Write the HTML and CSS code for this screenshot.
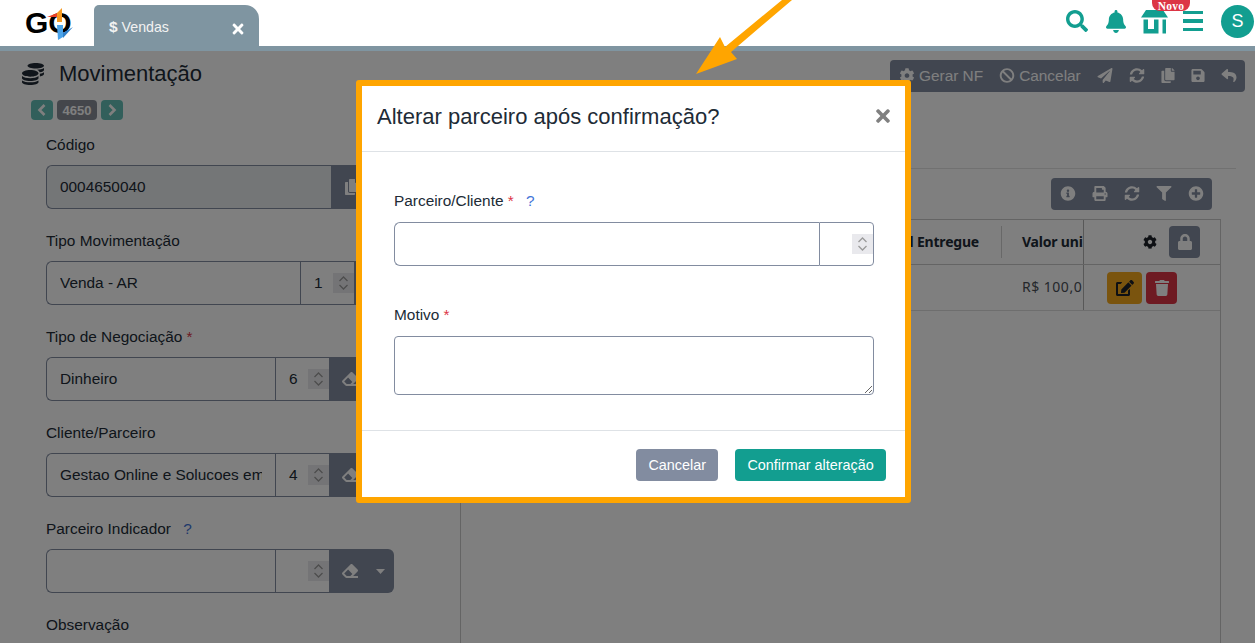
FILE: index.html
```html
<!DOCTYPE html>
<html>
<head>
  <meta name="viewport" content="width=device-width, initial-scale=1">
  <title>Movimentação</title>
  <link rel="stylesheet" href="styles.css">
</head>
<body>
  <svg class="defs" aria-hidden="true">
    <symbol id="i-search" viewBox="0 0 512 512"><path d="M505 442.7L405.3 343c-4.5-4.5-10.6-7-17-7H372c27.6-35.3 44-79.7 44-128C416 93.1 322.9 0 208 0S0 93.1 0 208s93.1 208 208 208c48.3 0 92.7-16.4 128-44v16.3c0 6.4 2.5 12.5 7 17l99.7 99.7c9.4 9.4 24.6 9.4 33.9 0l28.3-28.3c9.4-9.4 9.4-24.6.1-34zM208 336c-70.7 0-128-57.2-128-128 0-70.7 57.2-128 128-128 70.7 0 128 57.2 128 128 0 70.7-57.2 128-128 128z"/></symbol>
    <symbol id="i-bell" viewBox="0 0 448 512"><path d="M224 512c35.32 0 63.97-28.65 63.97-64H160.03c0 35.35 28.65 64 63.97 64zm215.39-149.71c-19.32-20.76-55.47-51.99-55.47-154.29 0-77.7-54.48-139.9-127.94-155.16V32c0-17.67-14.32-32-31.98-32s-31.98 14.33-31.98 32v20.84C118.56 68.1 64.08 130.3 64.08 208c0 102.3-36.15 133.53-55.47 154.29-6 6.45-8.66 14.16-8.61 21.71.11 16.4 12.98 32 32.1 32h383.8c19.12 0 32-15.6 32.1-32 .05-7.55-2.61-15.27-8.61-21.71z"/></symbol>
    <symbol id="i-store" viewBox="0 0 27 24"><path d="M5 0h17l5 7.500h-27zM2.500 9.500h4.500v9.500h6v-9.500h4.500v14h-15zM21.500 9.500h3.500v14h-3.500z"/></symbol>
    <symbol id="i-times" viewBox="0 0 352 512"><path d="M242.72 256l100.07-100.07c12.28-12.28 12.28-32.19 0-44.48l-22.24-22.24c-12.28-12.28-32.19-12.28-44.48 0L176 189.28 75.93 89.21c-12.28-12.28-32.19-12.28-44.48 0L9.21 111.45c-12.28 12.28-12.28 32.19 0 44.48L109.28 256 9.21 356.07c-12.28 12.28-12.28 32.19 0 44.48l22.24 22.24c12.28 12.28 32.2 12.28 44.48 0L176 322.72l100.07 100.07c12.28 12.28 32.2 12.28 44.48 0l22.24-22.24c12.28-12.28 12.28-32.19 0-44.48L242.72 256z"/></symbol>
    <symbol id="i-cog" viewBox="0 0 512 512"><path d="M487.4 315.7l-42.6-24.6c4.3-23.2 4.3-47 0-70.2l42.6-24.6c4.9-2.8 7.1-8.6 5.5-14-11.1-35.6-30-67.8-54.7-94.6-3.8-4.1-10-5.1-14.8-2.3L380.8 110c-17.9-15.4-38.5-27.3-60.8-35.1V25.8c0-5.6-3.9-10.5-9.4-11.7-36.7-8.2-74.3-7.8-109.2 0-5.500 1.200-9.400 6.100-9.400 11.700V75c-22.200 7.900-42.800 19.800-60.800 35.100L88.700 85.500c-4.900-2.800-11-1.900-14.800 2.300-24.700 26.700-43.600 58.900-54.700 94.600-1.700 5.400.6 11.200 5.500 14L67.300 221c-4.300 23.200-4.300 47 0 70.200l-42.600 24.600c-4.900 2.800-7.100 8.600-5.500 14 11.100 35.600 30 67.800 54.700 94.600 3.800 4.100 10 5.100 14.800 2.300l42.600-24.600c17.900 15.400 38.500 27.300 60.800 35.100v49.200c0 5.600 3.900 10.500 9.400 11.700 36.700 8.200 74.300 7.800 109.200 0 5.500-1.200 9.400-6.100 9.400-11.700v-49.200c22.200-7.900 42.800-19.800 60.800-35.100l42.600 24.600c4.900 2.800 11 1.900 14.800-2.300 24.700-26.700 43.600-58.900 54.700-94.600 1.500-5.500-.7-11.300-5.600-14.100zM256 336c-44.100 0-80-35.900-80-80s35.900-80 80-80 80 35.900 80 80-35.900 80-80 80z"/></symbol>
    <symbol id="i-ban" viewBox="0 0 512 512"><path d="M256 8C119.034 8 8 119.033 8 256s111.034 248 248 248 248-111.034 248-248S392.967 8 256 8zm130.108 117.892c65.448 65.448 70 165.481 20.677 235.637L150.470 105.216c70.204-49.356 170.226-44.735 235.638 20.676zM125.892 386.108c-65.448-65.448-70-165.481-20.677-235.637L361.530 406.784c-70.203 49.356-170.226 44.736-235.638-20.676z"/></symbol>
    <symbol id="i-plane" viewBox="0 0 512 512"><path d="M476 3.200L12.500 270.600c-18.100 10.400-15.800 35.600 2.200 43.200L121 358.400l287.300-253.200c5.500-4.900 13.300 2.600 8.600 8.300L176 407v80.500c0 23.600 28.500 32.900 42.500 15.800L282 426l124.600 52.200c14.200 6 30.400-2.900 33-18.200l72-432C515 7.800 493.300-6.800 476 3.200z"/></symbol>
    <symbol id="i-sync" viewBox="0 0 512 512"><path d="M370.720 133.280C339.458 104.008 298.888 87.962 255.848 88c-77.458.068-144.328 53.178-162.791 126.850-1.344 5.363-6.122 9.150-11.651 9.150H24.103c-7.498 0-13.194-6.807-11.807-14.176C33.933 94.924 134.813 8 256 8c66.448 0 126.791 26.136 171.315 68.685L463.030 40.970C478.149 25.851 504 36.559 504 57.941V192c0 13.255-10.745 24-24 24H345.941c-21.382 0-32.090-25.851-16.971-40.971l41.750-41.749zM32 296h134.059c21.382 0 32.090 25.851 16.971 40.971l-41.750 41.750c31.262 29.273 71.835 45.319 114.876 45.280 77.418-.07 144.315-53.144 162.787-126.849 1.344-5.363 6.122-9.150 11.651-9.150h57.304c7.498 0 13.194 6.807 11.807 14.176C478.067 417.076 377.187 504 256 504c-66.448 0-126.791-26.136-171.315-68.685L48.970 471.030C33.851 486.149 8 475.441 8 454.059V320c0-13.255 10.745-24 24-24z"/></symbol>
    <symbol id="i-copy" viewBox="0 0 448 512"><path d="M320 448v40c0 13.255-10.745 24-24 24H24c-13.255 0-24-10.745-24-24V120c0-13.255 10.745-24 24-24h72v296c0 30.879 25.121 56 56 56h168zm0-344V0H152c-13.255 0-24 10.745-24 24v368c0 13.255 10.745 24 24 24h272c13.255 0 24-10.745 24-24V128H344c-13.200 0-24-10.800-24-24zm120.971-31.029L375.029 7.029A24 24 0 0 0 358.059 0H352v96h96v-6.059a24 24 0 0 0-7.029-16.970z"/></symbol>
    <symbol id="i-save" viewBox="0 0 448 512"><path d="M433.941 129.941l-83.882-83.882A48 48 0 0 0 316.118 32H48C21.490 32 0 53.490 0 80v352c0 26.510 21.490 48 48 48h352c26.510 0 48-21.490 48-48V163.882a48 48 0 0 0-14.059-33.941zM224 416c-35.346 0-64-28.654-64-64 0-35.346 28.654-64 64-64s64 28.654 64 64c0 35.346-28.654 64-64 64zm96-304.520V212c0 6.627-5.373 12-12 12H76c-6.627 0-12-5.373-12-12V108c0-6.627 5.373-12 12-12h228.520c3.183 0 6.235 1.264 8.485 3.515l3.480 3.480A11.996 11.996 0 0 1 320 111.480z"/></symbol>
    <symbol id="i-reply" viewBox="0 0 512 512"><path d="M8.309 189.836L184.313 37.851C199.719 24.546 224 35.347 224 56.015v80.053c160.629 1.839 288 34.032 288 186.258 0 61.441-39.581 122.309-83.333 154.132-13.653 9.931-33.111-2.533-28.077-18.631 45.344-145.012-21.507-183.510-176.590-185.742V360c0 20.700-24.300 31.453-39.687 18.164l-176.004-152c-11.071-9.562-11.086-26.753 0-36.328z"/></symbol>
    <symbol id="i-info" viewBox="0 0 512 512"><path d="M256 8C119.043 8 8 119.083 8 256c0 136.997 111.043 248 248 248s248-111.003 248-248C504 119.083 392.957 8 256 8zm0 110c23.196 0 42 18.804 42 42s-18.804 42-42 42-42-18.804-42-42 18.804-42 42-42zm56 254c0 6.627-5.373 12-12 12h-88c-6.627 0-12-5.373-12-12v-24c0-6.627 5.373-12 12-12h12v-64h-12c-6.627 0-12-5.373-12-12v-24c0-6.627 5.373-12 12-12h64c6.627 0 12 5.373 12 12v100h12c6.627 0 12 5.373 12 12v24z"/></symbol>
    <symbol id="i-print" viewBox="0 0 512 512"><path d="M448 192V77.250c0-8.490-3.370-16.620-9.370-22.630L393.370 9.370c-6-6-14.140-9.370-22.630-9.370H96C78.330 0 64 14.330 64 32v160c-35.350 0-64 28.650-64 64v112c0 8.840 7.160 16 16 16h48v96c0 17.670 14.330 32 32 32h320c17.670 0 32-14.330 32-32v-96h48c8.840 0 16-7.160 16-16V256c0-35.350-28.650-64-64-64zm-64 256H128v-96h256v96zm0-224H128V64h192v48c0 8.840 7.160 16 16 16h48v96zm48 72c-13.250 0-24-10.750-24-24 0-13.260 10.750-24 24-24s24 10.740 24 24c0 13.250-10.750 24-24 24z"/></symbol>
    <symbol id="i-filter" viewBox="0 0 512 512"><path d="M487.976 0H24.028C2.710 0-8.047 25.866 7.058 40.971L192 225.941V432c0 7.831 3.821 15.170 10.237 19.662l80 55.980C298.020 518.690 320 507.493 320 487.980V225.941l184.947-184.970C520.021 25.896 509.338 0 487.976 0z"/></symbol>
    <symbol id="i-plus" viewBox="0 0 512 512"><path d="M256 8C119 8 8 119 8 256s111 248 248 248 248-111 248-248S393 8 256 8zm144 276c0 6.600-5.400 12-12 12h-92v92c0 6.600-5.400 12-12 12h-56c-6.600 0-12-5.400-12-12v-92h-92c-6.600 0-12-5.400-12-12v-56c0-6.600 5.400-12 12-12h92v-92c0-6.600 5.400-12 12-12h56c6.600 0 12 5.400 12 12v92h92c6.600 0 12 5.400 12 12v56z"/></symbol>
    <symbol id="i-lock" viewBox="0 0 448 512"><path d="M400 224h-24v-72C376 68.200 307.800 0 224 0S72 68.200 72 152v72H48c-26.500 0-48 21.500-48 48v192c0 26.500 21.500 48 48 48h352c26.500 0 48-21.500 48-48V272c0-26.500-21.500-48-48-48zm-104 0H152v-72c0-39.700 32.300-72 72-72s72 32.300 72 72v72z"/></symbol>
    <symbol id="i-trash" viewBox="0 0 448 512"><path d="M432 32H312l-9.400-18.700A24 24 0 0 0 281.100 0H166.800a23.720 23.720 0 0 0-21.400 13.300L136 32H16A16 16 0 0 0 0 48v32a16 16 0 0 0 16 16h416a16 16 0 0 0 16-16V48a16 16 0 0 0-16-16zM53.200 467a48 48 0 0 0 47.900 45h245.800a48 48 0 0 0 47.900-45L416 128H32z"/></symbol>
    <symbol id="i-edit" viewBox="0 0 576 512"><path d="M402.600 83.200l90.200 90.200c3.800 3.800 3.800 10 0 13.800L274.400 405.600l-92.800 10.300c-12.400 1.400-22.900-9.100-21.500-21.500l10.300-92.800L388.800 83.200c3.800-3.800 10-3.800 13.800 0zm162-22.900l-48.800-48.800c-15.200-15.200-39.900-15.200-55.200 0l-35.400 35.400c-3.800 3.800-3.800 10 0 13.800l90.200 90.200c3.800 3.800 10 3.800 13.800 0l35.400-35.400c15.200-15.300 15.200-40 0-55.200zM384 346.200V448H64V128h73.900c3.200 0 6.200-1.300 8.500-3.500l40-40c7.600-7.600 2.200-20.500-8.500-20.500H48C21.500 64 0 85.500 0 112v352c0 26.500 21.500 48 48 48h352c26.500 0 48-21.500 48-48V306.200c0-10.700-12.900-16-20.500-8.500l-40 40c-2.200 2.300-3.500 5.300-3.500 8.500z"/></symbol>
    <symbol id="i-eraser" viewBox="0 0 512 512"><path d="M497.941 273.941c18.745-18.745 18.745-49.137 0-67.882l-160-160c-18.745-18.745-49.136-18.746-67.883 0l-256 256c-18.745 18.745-18.745 49.137 0 67.882l96 96A48.004 48.004 0 0 0 144 480h356c6.627 0 12-5.373 12-12v-40c0-6.627-5.373-12-12-12H355.883l142.058-142.059zm-302.627-62.627l137.373 137.373L265.373 416H150.628l-80-80 124.686-124.686z"/></symbol>
    <symbol id="i-coins" viewBox="0 0 512 512"><path d="M0 405.300V448c0 35.300 86 64 192 64s192-28.700 192-64v-42.700C342.700 434.400 267.200 448 192 448S41.300 434.400 0 405.300zM320 128c106 0 192-28.700 192-64S426 0 320 0 128 28.700 128 64s86 64 192 64zM0 300.400V352c0 35.300 86 64 192 64s192-28.700 192-64v-51.600c-41.300 34-116.900 51.600-192 51.600S41.300 334.400 0 300.400zm416 11c57.300-11.100 96-31.700 96-55.400v-42.700c-23.200 16.400-57.300 27.600-96 34.500v63.600zM192 160C86 160 0 195.800 0 240s86 80 192 80 192-35.800 192-80-86-80-192-80zm219.300 56.300c60-10.800 100.700-32 100.700-56.300v-42.700c-35.500 25.100-96.500 38.600-160.700 41.800 29.500 14.300 51.200 33.500 60 57.200z"/></symbol>
    <symbol id="i-left" viewBox="0 0 22 20"><path d="M13.500 5L8.500 10l5 5" fill="none" stroke="currentColor" stroke-width="2.600"/></symbol>
    <symbol id="i-right" viewBox="0 0 22 20"><path d="M8.500 5l5 5-5 5" fill="none" stroke="currentColor" stroke-width="2.600"/></symbol>
    <symbol id="i-spin" viewBox="0 0 21 20"><path d="M6.500 8l4-4 4 4M6.500 12l4 4 4-4" fill="none" stroke="#9a9a9a" stroke-width="1.300"/></symbol>
    <symbol id="i-caret" viewBox="0 0 9 5"><path d="M0 0h9L4.500 5z"/></symbol>
  </svg>

  <div class="app">
    <header class="topbar">
      <div class="logo">
        <span class="logo-text">GO</span>
        <svg class="logo-mark" viewBox="0 0 50 32" aria-hidden="true">
          <path d="M22 9l13-5v5z" fill="#e8412a"/>
          <path d="M32 14V5l5-5v14z" fill="#f59a23"/>
          <path d="M32 17h6v12l-5 3z" fill="#4aa3ea"/>
          <path d="M38 25l10-6-10 11z" fill="#2f7fc9"/>
        </svg>
      </div>
      <div class="tab">
        <span class="tab-title"><b>$</b> Vendas</span>
        <svg class="tab-close"><use href="#i-times"/></svg>
      </div>
      <nav class="top-icons">
        <svg class="top-search"><use href="#i-search"/></svg>
        <svg class="top-bell"><use href="#i-bell"/></svg>
        <div class="store">
          <svg class="top-store"><use href="#i-store"/></svg>
          <span class="badge">Novo</span>
        </div>
        <div class="bars"><i></i><i></i><i></i></div>
        <div class="avatar">S</div>
      </nav>
    </header>
    <div class="topline"></div>

    <main class="page">
      <section class="left">
        <h1 class="title"><svg class="title-icon"><use href="#i-coins"/></svg>Movimentação</h1>
        <div class="pager">
          <span class="pill pill-teal"><svg><use href="#i-left"/></svg></span>
          <span class="pill pill-num">4650</span>
          <span class="pill pill-teal"><svg><use href="#i-right"/></svg></span>
        </div>

        <div class="field">
          <label>Código</label>
          <div class="group">
            <input class="ctl ctl-off" value="0004650040" readonly>
            <span class="dark dark-copy"><svg><use href="#i-copy"/></svg></span>
          </div>
        </div>
        <div class="field">
          <label>Tipo Movimentação</label>
          <div class="group">
            <input class="ctl" value="Venda - AR" readonly>
            <span class="num">1<svg class="spin"><use href="#i-spin"/></svg></span>
            <span class="dark dark-short"></span>
          </div>
        </div>
        <div class="field">
          <label>Tipo de Negociação <em>*</em></label>
          <div class="group">
            <input class="ctl" value="Dinheiro" readonly>
            <span class="num">6<svg class="spin"><use href="#i-spin"/></svg></span>
            <span class="dark"><svg><use href="#i-eraser"/></svg><svg class="caret"><use href="#i-caret"/></svg></span>
          </div>
        </div>
        <div class="field">
          <label>Cliente/Parceiro</label>
          <div class="group">
            <input class="ctl" value="Gestao Online e Solucoes em Tecnologia" readonly>
            <span class="num">4<svg class="spin"><use href="#i-spin"/></svg></span>
            <span class="dark"><svg><use href="#i-eraser"/></svg><svg class="caret"><use href="#i-caret"/></svg></span>
          </div>
        </div>
        <div class="field">
          <label>Parceiro Indicador <a class="hint">?</a></label>
          <div class="group">
            <input class="ctl" readonly>
            <span class="num"><svg class="spin"><use href="#i-spin"/></svg></span>
            <span class="dark"><svg><use href="#i-eraser"/></svg><svg class="caret"><use href="#i-caret"/></svg></span>
          </div>
        </div>
        <div class="field">
          <label>Observação</label>
        </div>
      </section>

      <section class="right">
        <div class="toolbar toolbar-main">
          <svg><use href="#i-cog"/></svg><span class="tool-text">Gerar NF</span>
          <svg><use href="#i-ban"/></svg><span class="tool-text">Cancelar</span>
          <svg><use href="#i-plane"/></svg>
          <svg><use href="#i-sync"/></svg>
          <svg class="tool-narrow"><use href="#i-copy"/></svg>
          <svg class="tool-narrow"><use href="#i-save"/></svg>
          <svg><use href="#i-reply"/></svg>
        </div>
        <hr class="rule">
        <div class="toolbar toolbar-table">
          <svg><use href="#i-info"/></svg>
          <svg><use href="#i-print"/></svg>
          <svg><use href="#i-sync"/></svg>
          <svg><use href="#i-filter"/></svg>
          <svg><use href="#i-plus"/></svg>
        </div>
        <div class="table">
          <div class="row row-head">
            <div class="col-qty">Total Entregue</div>
            <div class="col-val">Valor uni</div>
            <div class="col-act">
              <svg class="gear"><use href="#i-cog"/></svg>
              <span class="lock"><svg><use href="#i-lock"/></svg></span>
            </div>
          </div>
          <div class="row row-body">
            <div class="col-qty"></div>
            <div class="col-val">R$ 100,0</div>
            <div class="col-act col-act-body">
              <span class="act act-edit"><svg><use href="#i-edit"/></svg></span>
              <span class="act act-del"><svg><use href="#i-trash"/></svg></span>
            </div>
          </div>
        </div>
      </section>

      <div class="backdrop">
        <div class="modal">
          <div class="modal-head">
            <h2>Alterar parceiro após confirmação?</h2>
            <svg class="modal-close"><use href="#i-times"/></svg>
          </div>
          <div class="modal-body">
            <label>Parceiro/Cliente <em>*</em> <a class="hint">?</a></label>
            <div class="group group-modal">
              <input class="ctl">
              <span class="num"><svg class="spin"><use href="#i-spin"/></svg></span>
            </div>
            <label>Motivo <em>*</em></label>
            <textarea class="memo"></textarea>
          </div>
          <div class="modal-foot">
            <button class="btn btn-gray">Cancelar</button>
            <button class="btn btn-teal">Confirmar alteração</button>
          </div>
        </div>
      </div>
    </main>

    <svg class="arrow" viewBox="0 0 1255 100" aria-hidden="true">
      <path d="M782 0h10l-61 52 6 7-41 15 24-37 5 10z"/>
    </svg>
  </div>
</body>
</html>
```

FILE: styles.css
```css
* {
  box-sizing: border-box;
}
html, body {
  margin: 0;
  height: 100%;
  overflow: hidden;
}
body {
  font-family: "Liberation Sans", Arial, sans-serif;
  font-size: 15.4px;
  color: #212b36;
  background: #fff;
}
.defs {
  display: none;
}
.app {
  position: relative;
  height: 643px;
  overflow: hidden;
}

/* top bar */
.topbar {
  display: flex;
  height: 46px;
  padding-left: 25px;
}
.logo {
  position: relative;
  width: 69px;
  padding-top: 6px;
}
.logo-text {
  font-size: 30px;
  font-weight: bold;
  line-height: 34px;
  color: #000;
}
.logo-mark {
  position: absolute;
  left: 0;
  top: 8px;
  width: 50px;
  height: 32px;
}
.tab {
  display: flex;
  align-items: center;
  justify-content: space-between;
  width: 165px;
  height: 41px;
  margin-top: 5px;
  padding: 3px 15px 0 15px;
  background: #7f95a1;
  color: #f2f2f2;
  border-radius: 5px 14px 0 0;
  font-size: 14.2px;
}
.tab-title b {
  font-size: 15.5px;
}
.tab-close {
  width: 12px;
  height: 16px;
  margin-top: 4px;
  fill: #fff;
}
.top-icons {
  display: flex;
  align-items: center;
  gap: 15px;
  margin-left: auto;
  padding: 0 1px 4px 0;
  fill: #129e90;
}
.top-search {
  width: 22px;
  height: 22px;
  margin-right: 3px;
}
.top-bell {
  width: 20px;
  height: 23px;
}
.store {
  position: relative;
  width: 27px;
  height: 24px;
  margin-top: 1px;
}
.top-store {
  display: block;
  width: 27px;
  height: 24px;
}
.badge {
  position: absolute;
  left: 11px;
  top: -14px;
  display: flex;
  align-items: flex-end;
  justify-content: center;
  width: 38px;
  height: 15px;
  padding-top: 1px;
  background: #dc3545;
  color: #fff;
  border-radius: 0 0 8px 8px;
  font-family: "Liberation Serif", serif;
  font-size: 11.5px;
  font-weight: bold;
  line-height: 9px;
  letter-spacing: .2px;
  overflow: hidden;
}
.bars {
  display: flex;
  flex-direction: column;
  gap: 5px;
  width: 20px;
  margin-right: 3px;
}
.bars i {
  height: 3.500px;
  background: #129e90;
}
.avatar {
  width: 33px;
  height: 33px;
  border-radius: 50%;
  background: #129e90;
  color: #fff;
  text-align: center;
  font-size: 18px;
  line-height: 33px;
}
.topline {
  height: 5px;
  background: #7f95a1;
}

/* page under the dialog */
.page {
  position: relative;
  display: flex;
  height: 592px;
  overflow: hidden;
}
.left {
  width: 460px;
  flex: none;
  padding: 9px 0 0 46px;
}
.title {
  display: flex;
  align-items: center;
  gap: 15px;
  height: 28px;
  margin: 0 0 12px -24px;
  font-size: 22px;
  font-weight: normal;
}
.title-icon {
  width: 22px;
  height: 22px;
  fill: #212b36;
}
.pager {
  display: flex;
  gap: 4px;
  margin: 0 0 14px -15px;
}
.pill {
  display: flex;
  align-items: center;
  justify-content: center;
  height: 20px;
  border-radius: 4px;
  color: #fff;
  opacity: .65;
}
.pill svg {
  width: 22px;
  height: 20px;
}
.pill-teal {
  width: 22px;
  background: #129e90;
}
.pill-num {
  width: 40px;
  background: #4a4f60;
  font-size: 13px;
  font-weight: bold;
}
.field {
  height: 96px;
}
label {
  display: block;
  height: 21px;
  margin-bottom: 10px;
  font-size: 15.4px;
  line-height: 21px;
}
label em {
  font-style: normal;
  color: #dc3545;
}
.hint {
  margin-left: 8px;
  color: #3f73d8;
}
.group {
  display: flex;
  width: 348px;
  height: 44px;
}
.ctl {
  flex: 1;
  min-width: 0;
  padding: 0 13px;
  border: 1px solid #828ca0;
  border-right: 0;
  border-radius: 6px 0 0 6px;
  background: #fff;
  color: #212b36;
  font: 15.4px "Liberation Sans", Arial, sans-serif;
  outline: none;
}
.ctl-off {
  background: #e9ecef;
}
.num {
  display: flex;
  align-items: center;
  justify-content: space-between;
  flex: none;
  width: 54px;
  padding: 0 0 1px 13px;
  border: 1px solid #828ca0;
  border-right: 0;
  font-size: 15.4px;
}
.spin {
  width: 21px;
  height: 20px;
  margin: 1px 0 0 auto;
  background: #e9e9ed;
}
.dark {
  display: flex;
  align-items: center;
  flex: none;
  width: 65px;
  padding-left: 13px;
  background: #828ca0;
  border-radius: 0 6px 6px 0;
  fill: #fff;
}
.dark svg {
  width: 16px;
  height: 16px;
}
.dark .caret {
  width: 9px;
  height: 5px;
  margin-left: 18px;
}
.dark-copy {
  width: 63px;
}
.dark-short {
  width: 40px;
}

/* right side */
.right {
  flex: 1;
  min-width: 0;
  padding-top: 9px;
}
.toolbar {
  display: flex;
  align-items: center;
  gap: 16px;
  height: 32px;
  margin-left: auto;
  padding-bottom: 1px;
  background: #828ca0;
  border-radius: 4px;
  color: #fff;
  fill: #fff;
}
.toolbar svg {
  width: 16px;
  height: 15px;
  flex: none;
}
.toolbar .tool-narrow {
  width: 14px;
}
.tool-text {
  margin-left: -12px;
}
.toolbar-main {
  width: 355px;
  margin-right: 10px;
  padding-left: 9px;
}
.toolbar-table {
  width: 161px;
  margin-right: 43px;
  padding-left: 9px;
}
.rule {
  height: 1px;
  margin: 76px 19px 9px 0;
  border: 0;
  background: #e3e3e3;
}
.table {
  height: 500px;
  margin: 9px 34px 0 0;
  border: 1px solid #c8c8c8;
  font-family: "Noto Sans", sans-serif;
  font-size: 14px;
}
.row {
  display: flex;
  border-bottom: 1px solid #dcdcdc;
}
.row-head {
  height: 45px;
  font-weight: bold;
  color: #212b36;
  letter-spacing: -.2px;
  border-bottom-color: #c8c8c8;
}
.row-body {
  height: 46px;
  color: #4a4f57;
}
.row-body .col-val {
  letter-spacing: .5px;
}
.col-qty {
  width: 541px;
  flex: none;
  padding-right: 22px;
  text-align: right;
  line-height: 44px;
  white-space: nowrap;
}
.row-head .col-qty {
  height: 32px;
  margin-top: 6px;
  line-height: 32px;
  border-right: 1px solid #d0d0d0;
}
.col-val {
  width: 82px;
  flex: none;
  padding-left: 20px;
  line-height: 44px;
  white-space: nowrap;
  overflow: hidden;
  border-right: 1px solid #b0b0b0;
}
.col-act {
  display: flex;
  align-items: center;
  flex: 1;
  padding-left: 59px;
}
.gear {
  width: 14px;
  height: 14px;
  fill: #1c2128;
}
.lock {
  display: flex;
  align-items: center;
  justify-content: center;
  width: 31px;
  height: 32px;
  margin-left: 12px;
  background: #828ca0;
  border-radius: 4px;
}
.lock svg {
  width: 14px;
  height: 16px;
  fill: #fff;
}
.col-act-body {
  gap: 4px;
  padding-left: 23px;
}
.act {
  display: flex;
  align-items: center;
  justify-content: center;
  height: 32px;
  border-radius: 4px;
}
.act-edit {
  width: 35px;
  background: #f5a81c;
  fill: #1c2128;
}
.act-edit svg {
  width: 18px;
  height: 16px;
}
.act-del {
  width: 31px;
  background: #dc3545;
  fill: #fff;
}
.act-del svg {
  width: 14px;
  height: 16px;
}

/* dialog */
.backdrop {
  position: absolute;
  left: 0;
  top: 0;
  right: 0;
  bottom: 0;
  background: rgba(0, 0, 0, .5);
}
.modal {
  position: absolute;
  left: 356px;
  top: 29px;
  width: 555px;
  height: 423px;
  border: 6.500px solid #ffa500;
  border-radius: 3px;
  background: #fff;
}
.modal-head {
  display: flex;
  align-items: center;
  justify-content: space-between;
  height: 66px;
  padding: 0 15px;
  border-bottom: 1px solid #dee2e6;
}
.modal-head h2 {
  margin: 0 0 4px;
  font-size: 22px;
  font-weight: normal;
}
.modal-close {
  width: 14px;
  height: 20px;
  margin-bottom: 6px;
  fill: #808080;
}
.modal-body {
  height: 278px;
  padding: 38px 31px 0 32px;
}
.modal-body label {
  margin-bottom: 11px;
}
.group-modal {
  width: 480px;
  margin-bottom: 38px;
}
.group-modal .num {
  width: 55px;
  border-right: 1px solid #828ca0;
  border-radius: 0 4px 4px 0;
}
.memo {
  display: block;
  width: 480px;
  height: 59px;
  border: 1px solid #828ca0;
  border-radius: 4px;
  outline: none;
}
.modal-foot {
  display: flex;
  justify-content: flex-end;
  gap: 17px;
  padding: 18px 19px 0 0;
  border-top: 1px solid #dee2e6;
}
.btn {
  height: 32px;
  padding: 0 12.200px;
  border: 0;
  border-radius: 4px;
  color: #fff;
  font: 14.400px "Liberation Sans", Arial, sans-serif;
}
.btn-gray {
  background: #828ca0;
}
.btn-teal {
  background: #129e90;
}

.arrow {
  position: absolute;
  left: 0;
  top: 0;
  width: 1255px;
  height: 100px;
  fill: #ffa500;
  pointer-events: none;
}
```
